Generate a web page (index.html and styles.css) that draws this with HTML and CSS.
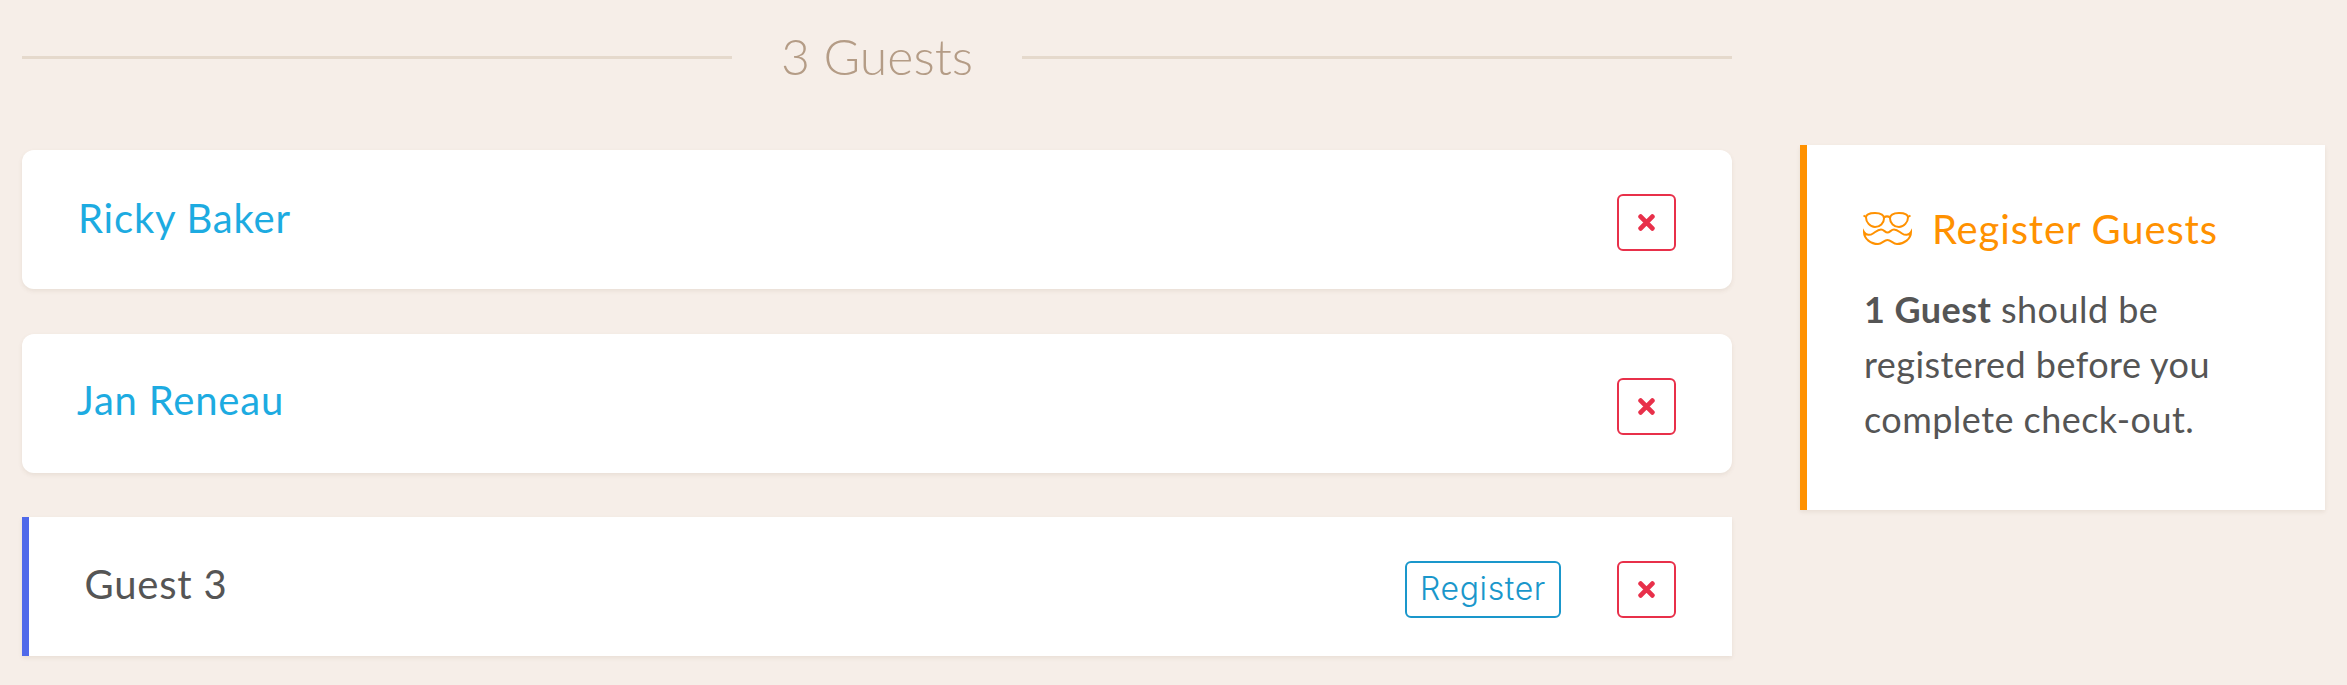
FILE: index.html
```html
<!DOCTYPE html>
<html lang="en">
<head>
<meta charset="utf-8">
<title>Guests</title>
<link rel="stylesheet" href="styles.css">
</head>
<body>
<div class="page">
  <main class="guests">
    <div class="heading">
      <span class="rule"></span>
      <h2 class="heading-text">3 Guests</h2>
      <span class="rule"></span>
    </div>
    <div class="card rounded">
      <a class="name link" href="#">Ricky Baker</a>
      <button class="remove" aria-label="Remove"><svg viewBox="0 0 16 16" class="x"><path d="M2.5 2.5 13.5 13.5M13.5 2.5 2.5 13.5"/></svg></button>
    </div>
    <div class="card rounded">
      <a class="name link jan" href="#">Jan Reneau</a>
      <button class="remove" aria-label="Remove"><svg viewBox="0 0 16 16" class="x"><path d="M2.5 2.5 13.5 13.5M13.5 2.5 2.5 13.5"/></svg></button>
    </div>
    <div class="card pending">
      <span class="name">Guest 3</span>
      <button class="register">Register</button>
      <button class="remove" aria-label="Remove"><svg viewBox="0 0 16 16" class="x"><path d="M2.5 2.5 13.5 13.5M13.5 2.5 2.5 13.5"/></svg></button>
    </div>
  </main>
  <aside class="notice">
    <h3 class="notice-title">
      <svg class="notice-icon" viewBox="0 0 50 33">
        <path d="M3 5.500C3 2 7 1 12 1 17 1 21 2 21 6.500 21 11 17 15 12 15 7 15 3 10 3 5.500Z"/>
        <path d="M45 5.500C45 2 41 1 36 1 31 1 27 2 27 6.500 27 11 31 15 36 15 41 15 45 10 45 5.500Z"/>
        <path d="M21 5.500C23 4 25 4 27 5.500M3 5 .5 3.500M45 5 47.500 3.500"/>
        <path d="M1 20C3 23.500 7 23.500 10 21.500 13 19.500 15 17.500 18 17.500 21 17.500 22 20.500 24.500 20.500 27 20.500 28 17.500 31 17.500 34 17.500 36 19.500 39 21.500 42 23.500 46 23.500 48 20 48 27 41 32 34 32 30 32 28 28 24.500 28 21 28 19 32 15 32 8 32 1 27 1 20Z"/>
      </svg>
      <span>Register Guests</span>
    </h3>
    <p class="notice-text"><strong>1 Guest</strong> should be registered before you complete check-out.</p>
  </aside>
</div>
</body>
</html>
```
FILE: styles.css
```css
* { box-sizing: border-box; }
html, body { margin: 0; height: 100%; overflow: hidden; }
body {
  background: #f6eee8;
  font-family: Lato, "Noto Sans", sans-serif;
  color: #555;
}
.page {
  display: flex;
  align-items: flex-start;
  gap: 68px;
  padding: 0 22px;
}
.guests {
  flex: 0 0 1710px;
  display: flex;
  flex-direction: column;
  gap: 44.500px;
}
.heading {
  display: flex;
  align-items: center;
  height: 115px;
  margin-bottom: -9.500px;
}
.rule { flex: 1; height: 3px; background: #e5d9cc; }
.heading-text {
  width: 290px;
  margin: 0 0 3px;
  text-align: center;
  font-family: Lato, sans-serif;
  font-weight: 300;
  font-size: 50px;
  line-height: 60px;
  color: #b49c86;
}
.card {
  display: flex;
  align-items: center;
  height: 139px;
  padding-top: 6px;
  padding-right: 56px;
  background: #fff;
  box-shadow: 0 2px 4px rgba(120, 90, 60, .1);
}
.rounded { padding-left: 56px; border-radius: 12px; }
.pending { padding-left: 55.500px; border-left: 7px solid #4f69ea; }
.pending .name { margin-bottom: 11px; }
.name {
  margin-right: auto;
  margin-bottom: 9px;
  font-size: 40px;
  line-height: 48px;
  letter-spacing: .8px;
  color: #555;
}
.link { color: #1dabe1; text-decoration: none; }
.jan { margin-left: -1px; margin-bottom: 12px; }
button { font: inherit; background: #fff; cursor: pointer; padding: 0; }
.remove {
  display: flex;
  align-items: center;
  justify-content: center;
  width: 59px;
  height: 57px;
  border: 2.500px solid #e8304a;
  border-radius: 6px;
}
.x { width: 17px; height: 17px; fill: none; stroke: #e8304a; stroke-width: 4.500; stroke-linecap: round; }
.register {
  width: 156px;
  height: 57px;
  margin-right: 56px;
  padding-bottom: 2px;
  border: 2.500px solid #1a97cb;
  border-radius: 6px;
  color: #1a97cb;
  font-family: Inter, sans-serif;
  font-weight: 300;
  font-size: 32px;
  letter-spacing: .6px;
}
.notice {
  flex: 0 0 525px;
  height: 365px;
  margin-top: 145px;
  padding: 58px 59px 0 57px;
  background: #fff;
  border-left: 7px solid #ff9100;
  box-shadow: 0 2px 4px rgba(120, 90, 60, .1);
}
.notice-title {
  display: flex;
  align-items: center;
  gap: 19px;
  margin: 0 0 29px;
  font-weight: 400;
  font-size: 40px;
  line-height: 50px;
  letter-spacing: .85px;
  color: #ff9100;
}
.notice-title span { position: relative; top: 1px; }
.notice-icon { width: 50px; height: 33px; fill: none; stroke: #ff9100; stroke-width: 2; margin-left: -1px; }
.notice-text { margin: 0; font-size: 36px; line-height: 55px; color: #555; letter-spacing: .45px; }
```
